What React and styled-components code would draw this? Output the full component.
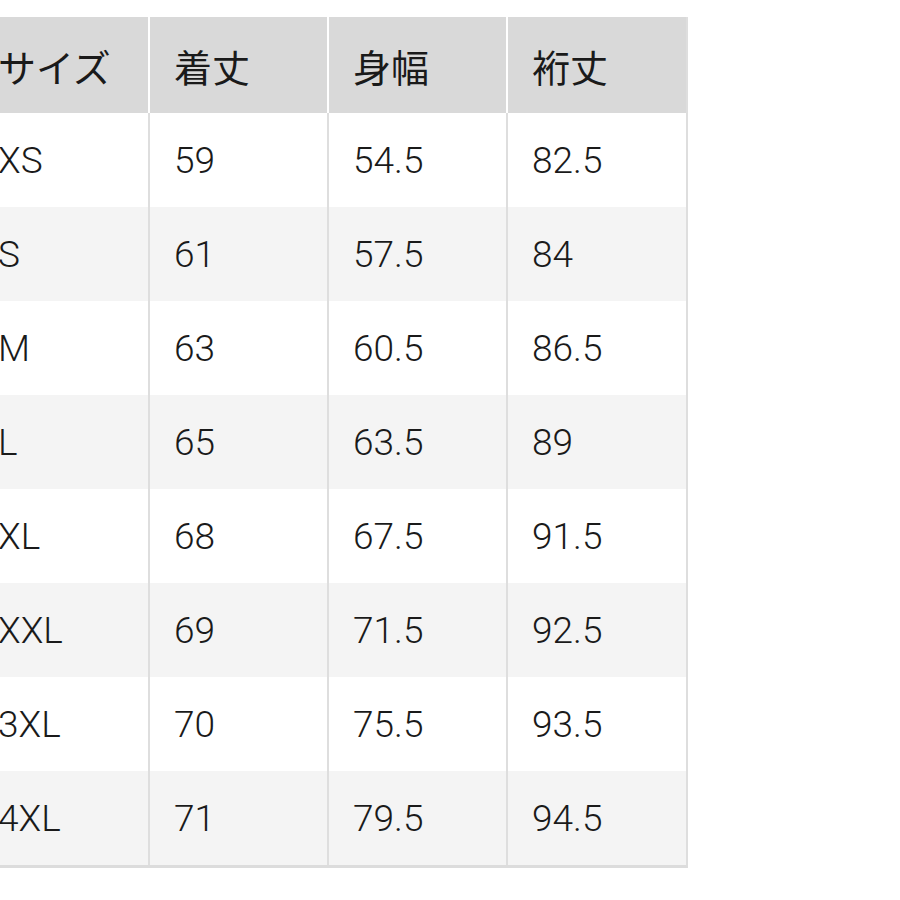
import React from 'react';
import styled, {createGlobalStyle} from 'styled-components';

const GlobalStyle = createGlobalStyle`
  html, body {
    margin: 0;
    padding: 0;
    background: #fff;
    overflow: hidden;
  }
  body {
    font-family: Roboto, "Noto Sans CJK JP", sans-serif;
    color: #1e1e1e;
  }
`;

const Page = styled.div`
  width: 900px;
  height: 900px;
  overflow: hidden;
  padding-top: 17px;
  box-sizing: border-box;
`;

const Table = styled.div`
  display: grid;
  grid-template-columns: 176px 179px 179px 180px;
  margin-left: -28px;
  width: max-content;
  border-right: 2px solid #dedede;
  border-bottom: 3px solid #dcdcdc;
`;

const Cell = styled.div`
  height: ${p => (p.$head ? 96 : 94)}px;
  box-sizing: border-box;
  display: flex;
  align-items: center;
  padding-left: 24px;
  background: ${p => (p.$head ? '#d9d9d9' : p.$alt ? '#f4f4f4' : '#fff')};
  border-left: 2px solid ${p => (p.$head ? '#fff' : '#dedede')};
  font-family: ${p => (p.$head ? '"Noto Sans CJK JP", sans-serif' : 'Roboto, "Noto Sans CJK JP", sans-serif')};
  font-size: ${p => (p.$head ? 38 : 37)}px;
  font-weight: ${p => (p.$head ? 400 : 300)};
  color: #1a1a1a;
  white-space: nowrap;
`;

const head = ['サイズ', '着丈', '身幅', '裄丈'];

const rows = [
  ['XS', '59', '54.5', '82.5'],
  ['S', '61', '57.5', '84'],
  ['M', '63', '60.5', '86.5'],
  ['L', '65', '63.5', '89'],
  ['XL', '68', '67.5', '91.5'],
  ['XXL', '69', '71.5', '92.5'],
  ['3XL', '70', '75.5', '93.5'],
  ['4XL', '71', '79.5', '94.5'],
];

export default function App() {
  return (
    <Page>
      <GlobalStyle/>
      <Table>
        {head.map(h => <Cell key={h} $head>{h}</Cell>)}
        {rows.map((row, i) =>
          row.map((v, j) => <Cell key={i + '-' + j} $alt={i % 2 === 1}>{v}</Cell>)
        )}
      </Table>
    </Page>
  );
}
